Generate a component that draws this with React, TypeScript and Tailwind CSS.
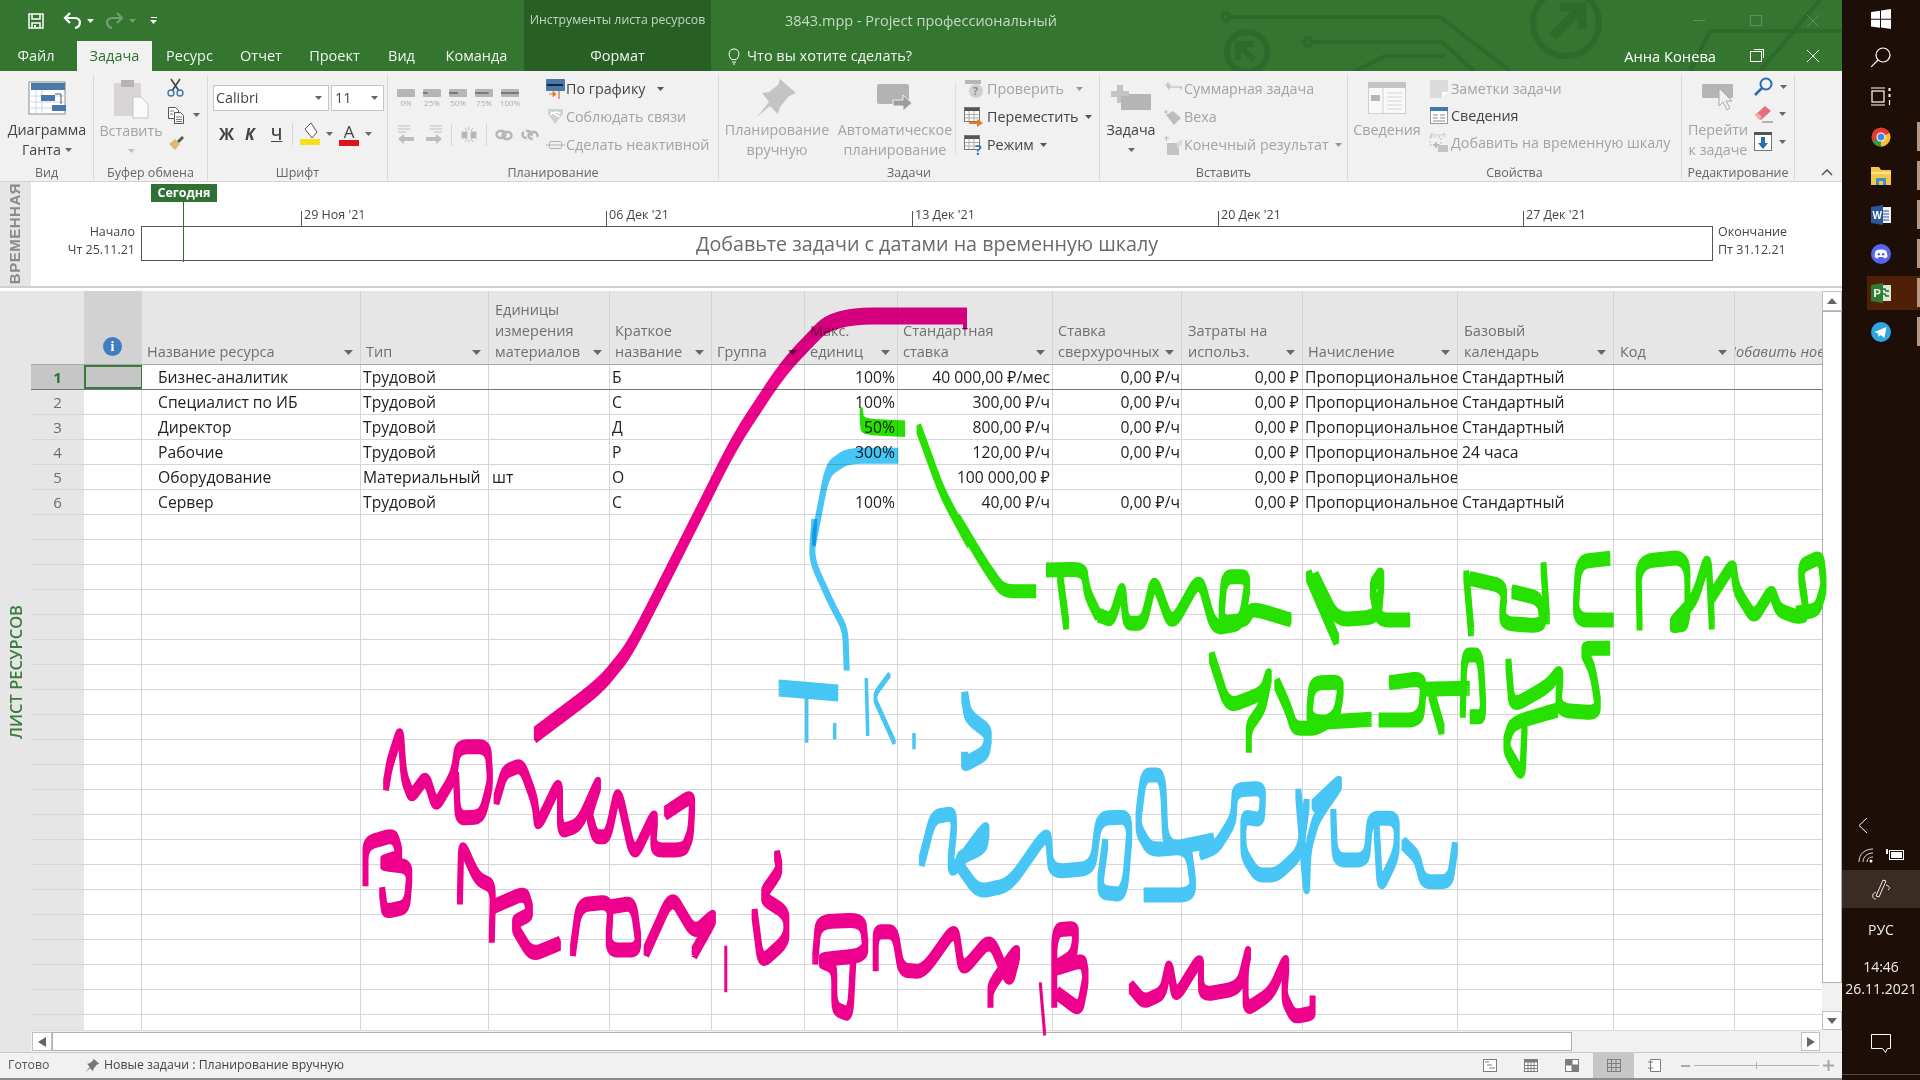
import React from "react";

type P = number[];

function sharp(p: P, ox: number, oy: number, sx: number, sy: number, dy: number) {
  const pts: [number, number][] = [];
  for (let i = 0; i < p.length; i += 2) pts.push([ox + p[i] * sx, oy + p[i + 1] * sy + dy]);
  const n = (v: number) => v.toFixed(1);
  let d = `M${n(pts[0][0])} ${n(pts[0][1])}`;
  for (let i = 1; i < pts.length - 1; i++) {
    const [ax, ay] = pts[i - 1], [bx, by] = pts[i], [cx, cy] = pts[i + 1];
    const k = 0.3;
    d += `L${n(bx - (bx - ax) * k)} ${n(by - (by - ay) * k)}Q${n(bx)} ${n(by)} ${n(bx + (cx - bx) * k)} ${n(by + (cy - by) * k)}`;
  }
  const l = pts[pts.length - 1];
  d += `L${n(l[0])} ${n(l[1])}`;
  return d;
}

function Stroke({ p, c, f, nib = 4.5, w = 6 }: { p: P; c: string; f: number[]; nib?: number; w?: number }) {
  const ds: string[] = [];
  for (let dy = -nib; dy <= nib; dy += 1.5) ds.push(sharp(p, f[0], f[1], f[2], f[3], dy));
  return <path d={ds.join("")} stroke={c} strokeWidth={w} fill="none" strokeLinejoin="round" strokeLinecap="butt" />;
}

const Z8 = [340, 700, 1 / 1.568, 1 / 3];
const Z9 = [740, 520, 1 / 1.425, 1 / 3];
const Z5 = [780, 280, 1 / 1.479, 1 / 3];
const Z10 = [1200, 750, 1 / 3, 1 / 3];
const F1 = [0, 0, 1, 1];
const PINK = "#ec008c";
const BLUE = "#47c5f4";
const GREEN = "#27e000";

function InkLayer() {
  const pink: P[] = [
    [72, 258, 78, 190, 95, 90, 100, 230, 112, 290, 135, 230, 150, 320, 178, 230, 185, 140, 232, 140, 236, 250, 222, 350, 185, 355, 182, 230],
    [245, 300, 258, 215, 285, 195, 305, 300, 310, 380, 345, 240, 345, 395, 375, 375, 408, 235, 390, 340, 400, 410, 420, 410, 436, 265, 460, 475, 495, 335, 490, 450, 540, 450, 550, 400, 553, 285, 510, 340],
    [40, 545, 40, 430, 85, 405, 95, 470, 62, 490, 110, 500, 105, 620, 70, 635, 66, 575],
    [188, 600, 190, 430, 215, 535, 240, 560, 238, 715],
    [240, 620, 290, 578, 300, 640, 270, 670, 300, 765, 345, 730],
    [365, 755, 375, 615, 425, 605, 420, 750, 470, 750, 460, 610, 425, 620],
    [480, 755, 520, 585, 555, 700, 590, 640, 555, 760],
    [605, 740, 605, 875],
    [650, 640, 660, 790, 700, 720, 700, 640, 660, 590, 690, 510, 685, 465],
    [745, 780, 750, 665, 820, 660, 825, 765, 750, 780, 775, 800, 775, 925, 800, 945, 805, 770],
    [840, 800, 840, 695, 870, 695, 880, 810, 915, 815, 965, 680, 975, 815, 1020, 715, 1050, 850, 1065, 740, 1020, 860, 1020, 910],
    [1098, 850, 1105, 1005],
    [1120, 910, 1120, 690, 1155, 685, 1150, 770, 1115, 810, 1165, 780, 1170, 830, 1160, 930, 1125, 880],
    [1240, 860, 1260, 905, 1290, 880, 1300, 790, 1310, 895, 1350, 770, 1350, 885, 1410, 865, 1425, 750, 1420, 800, 1420, 930, 1460, 880, 1485, 770, 1480, 890, 1495, 950, 1525, 940, 1525, 900],
  ];
  const blue8: P[] = [
    [912, 485, 930, 350, 965, 340, 955, 530, 1015, 375, 1010, 440, 965, 480, 1000, 575, 1050, 555, 1110, 390, 1115, 515, 1180, 505, 1190, 355, 1240, 350, 1230, 585, 1190, 575, 1200, 430],
    [1260, 585, 1340, 585, 1330, 440, 1270, 450, 1250, 380, 1260, 225, 1290, 225, 1295, 450, 1370, 420],
  ];
  const blue10: P[] = [
    [0, 310, 50, 290, 100, 210, 105, 120, 190, 115, 185, 210, 130, 200, 130, 310, 170, 375, 230, 375, 300, 310, 320, 160],
    [295, 130, 320, 440, 325, 290, 350, 200, 430, 85, 340, 170],
    [400, 190, 405, 330, 500, 330, 510, 205, 590, 205, 590, 310, 540, 415, 530, 240],
    [610, 280, 650, 320, 670, 395, 750, 395, 765, 290],
  ];
  const blue9: P[] = [
    [55, 505, 140, 520],
    [95, 540, 95, 665],
    [135, 615, 135, 655],
    [180, 480, 182, 645],
    [213, 465, 190, 530, 205, 600, 220, 670],
    [248, 645, 248, 685],
    [320, 530, 325, 590, 355, 640, 350, 700, 320, 735, 320, 710],
  ];
  const green9: P[] = [
    [436, 150, 490, 148, 495, 220, 510, 285],
    [456, 170, 465, 315],
    [510, 285, 530, 300, 545, 195, 550, 310, 575, 310, 590, 175, 615, 320, 655, 170, 675, 325, 715, 310, 725, 170, 690, 170, 685, 310, 720, 300, 730, 265, 785, 300],
    [810, 165, 850, 360],
    [820, 170, 850, 300, 910, 290, 915, 155, 900, 200, 910, 300, 955, 300],
    [1035, 165, 1042, 335],
    [1040, 175, 1090, 200, 1085, 310, 1145, 318, 1140, 235, 1100, 215],
    [1150, 300, 1145, 140],
    [1240, 115, 1195, 125, 1190, 300, 1245, 300],
    [1282, 318, 1280, 125, 1350, 110, 1350, 312, 1325, 318, 1360, 240, 1380, 105, 1385, 315],
    [1385, 230, 1415, 130, 1420, 210, 1445, 295, 1470, 210, 1480, 270, 1505, 290, 1520, 285, 1510, 140, 1540, 110, 1545, 200, 1535, 270, 1505, 280],
    [672, 410, 695, 560, 745, 520, 755, 455, 745, 560, 725, 620, 725, 685],
    [765, 490, 780, 560, 790, 625, 820, 625, 850, 590, 858, 485, 815, 490, 810, 610, 900, 598],
    [910, 600, 970, 600, 975, 475, 925, 488],
    [985, 520, 1000, 630],
    [970, 508, 1040, 505],
    [1030, 580, 1032, 405, 1055, 405, 1060, 590, 1040, 590],
    [1095, 430, 1100, 560, 1150, 500, 1170, 450, 1165, 570, 1225, 580, 1215, 450, 1200, 385, 1240, 385],
    [1165, 570, 1100, 610, 1090, 680, 1115, 770, 1118, 620],
  ];
  return (
    <>
      <svg className="absolute left-0 top-0 z-10 pointer-events-none" width="1842" height="1080" viewBox="0 0 1842 1080">
        {pink.map((p, i) => <Stroke key={i} p={p} c={PINK} f={Z8} nib={i === 7 || i === 11 ? 1 : 4.5} w={i === 7 || i === 11 ? 3 : 6} />)}
        {blue8.map((p, i) => <Stroke key={i} p={p} c={BLUE} f={Z8} />)}
        {blue10.map((p, i) => <Stroke key={i} p={p} c={BLUE} f={Z10} />)}
        <Stroke p={[106, 0, 102, 120, 130, 250, 150, 330, 152, 450]} c={BLUE} f={Z9} nib={1} w={6} />
        {blue9.map((p, i) => <Stroke key={i} p={p} c={BLUE} f={Z9} nib={i === 0 ? 7 : i === 6 ? 5 : 2} w={i === 6 ? 7 : 3.5} />)}
        {green9.map((p, i) => <Stroke key={i} p={p} c={GREEN} f={Z9} />)}
        <Stroke p={[205, 445, 240, 640, 280, 790]} c={GREEN} f={Z5} nib={4} w={5} />
        <Stroke p={[310, 0, 350, 140, 375, 215, 422, 215]} c={GREEN} f={Z9} nib={5} w={5} />
      </svg>
      <svg className="absolute left-0 top-0 z-10 pointer-events-none mix-blend-multiply" width="1842" height="1080" viewBox="0 0 1842 1080">
        <Stroke p={[535, 735, 600, 686, 630, 649, 686, 539, 735, 441, 784, 367, 833, 316, 967, 316]} c={PINK} f={F1} nib={6} w={5} />
        <Stroke p={[965, 318, 965, 329]} c={PINK} f={F1} nib={1} w={4} />
        <Stroke p={[175, 527, 100, 527, 70, 570, 50, 780]} c={BLUE} f={Z5} nib={6} w={4} />
        <Stroke p={[120, 403, 122, 440, 185, 447]} c={GREEN} f={Z5} nib={7} w={3} />
      </svg>
    </>
  );
}

/* ---------- small icons ---------- */
const Caret = ({ c = "#666", className = "" }: { c?: string; className?: string }) => (
  <svg width="7" height="4" viewBox="0 0 7 4" className={className}><path d="M0 0h7L3.5 4z" fill={c} /></svg>
);

const Gantt = () => (
  <svg width="38" height="34" viewBox="0 0 38 34">
    <rect x="1" y="1" width="36" height="32" fill="#fff" stroke="#8a8a8a" />
    <rect x="3" y="2" width="34" height="7" fill="#4a78a8" />
    <path d="M8 9v24M14 9v24M3 15h34M3 21h34M3 27h34" stroke="#c9d6e4" />
    <rect x="13" y="14" width="14" height="6" fill="#4a78a8" />
    <rect x="24" y="24" width="14" height="6" fill="#4a78a8" />
    <path d="M27 13h6v10" stroke="#555" fill="none" />
  </svg>
);
const Clip = () => (
  <svg width="36" height="40" viewBox="0 0 36 40">
    <rect x="1" y="4" width="27" height="33" fill="#d9d5d5" />
    <rect x="8" y="1" width="13" height="7" fill="#b8b3b3" />
    <path d="M20 18h8l7 7v14H20z" fill="#fafafa" stroke="#c4c4c4" />
  </svg>
);
const Scissors = () => (
  <svg width="18" height="19" viewBox="0 0 18 19" fill="none">
    <path d="M4 1l8 12M13 1L5 13" stroke="#444" strokeWidth="1.6" />
    <circle cx="4" cy="15" r="3" stroke="#3f79ad" strokeWidth="1.4" />
    <circle cx="13" cy="15" r="3" stroke="#3f79ad" strokeWidth="1.4" />
  </svg>
);
const CopyI = () => (
  <svg width="18" height="18" viewBox="0 0 18 18" fill="#fff" stroke="#555">
    <path d="M1.5 1.5h7l3 3v8h-10z" />
    <path d="M7.5 6.5h6l3 3v8h-9z" />
    <path d="M3 5h4M3 8h3M9 11h6M9 13.500h6M9 15.500h6" strokeWidth=".8" />
  </svg>
);
const Brush = () => (
  <svg width="18" height="16" viewBox="0 0 18 16">
    <path d="M2 9l6-5 5 5-5 6z" fill="#e0b77a" />
    <path d="M10 6l5-5 2 2-5 5z" fill="#555" />
  </svg>
);
const Pct = ({ t, f }: { t: string; f: number }) => (
  <div className="flex flex-col items-center w-[26px]">
    <svg width="18" height="8" viewBox="0 0 18 8">
      <rect width="18" height="8" rx="1" fill="#b5b5b5" />
      {f > 0 && <rect y="3" width={18 * f} height="2" fill="#7b7b7b" />}
    </svg>
    <span className="text-[8px] leading-[12px] text-[#aaa]">{t}</span>
  </div>
);
const Sep = ({ h = "h-[22px]" }: { h?: string }) => <span className={`w-px ${h} bg-[#d4d4d4]`} />;
const Outdent = ({ flip }: { flip?: boolean }) => (
  <svg width="19" height="20" viewBox="0 0 19 20" style={flip ? { transform: "scaleX(-1)" } : undefined}>
    <path d="M1 1h12M1 4h12M1 7h8" stroke="#bdbdbd" />
    <path d="M1 14l6-5v3h10v4H7v3z" fill="#bdbdbd" />
  </svg>
);
const Split = () => (
  <svg width="16" height="18" viewBox="0 0 16 18" stroke="#bdbdbd">
    <rect x="1" y="6" width="5" height="6" fill="#b5b5b5" /><rect x="10" y="6" width="5" height="6" fill="#b5b5b5" />
    <path d="M8 1v3M8 14v3M4 2l2 3M12 2l-2 3M4 16l2-3M12 16l-2-3" fill="none" />
  </svg>
);
const LinkI = ({ broken }: { broken?: boolean }) => (
  <svg width="18" height="18" viewBox="0 0 18 18" fill="none" stroke="#b5b5b5" strokeWidth="2.400">
    <rect x="1.500" y="5" width="9" height="7" rx="3.500" strokeDasharray={broken ? "9 5" : undefined} />
    <rect x="7.500" y="6" width="9" height="7" rx="3.500" strokeDasharray={broken ? "9 5" : undefined} />
  </svg>
);
const Sched = () => (
  <svg width="19" height="20" viewBox="0 0 19 20">
    <rect x="0" y="0" width="19" height="12" rx="1" fill="#4a78a8" />
    <rect x="1" y="5" width="16" height="2" fill="#14263a" />
    <path d="M3 15h6M7 12.500l3 2.500-3 2.500z" stroke="#e07c26" fill="#e07c26" />
    <path d="M13 12v8" stroke="#c5582a" />
  </svg>
);
const Respect = () => (
  <svg width="19" height="20" viewBox="0 0 19 20" fill="none">
    <path d="M2 7l7 10 8-10V2H2z" fill="#d0d0d0" />
    <path d="M5 8c0-3 8-4 9-1M5 5c3 2 6 3 9 5" stroke="#fff" strokeWidth="1.500" />
  </svg>
);
const Inact = () => (
  <svg width="19" height="10" viewBox="0 0 19 10" fill="none" stroke="#b0b0b0">
    <path d="M0 5h19" /><rect x="3.500" y="1.500" width="12" height="7" rx="1" />
  </svg>
);
const Pin = ({ s = 42, c = "#c4c4c4" }: { s?: number; c?: string }) => (
  <svg width={s} height={s} viewBox="0 0 42 42">
    <path d="M24 2l16 14-7 3-9 11-2 7-8-8L1 40l12-15-7-9 7-1 9-7z" fill={c} />
  </svg>
);
const AutoI = () => (
  <svg width="36" height="28" viewBox="0 0 36 28">
    <rect x="0" y="0" width="32" height="20" rx="2" fill="#b3b3b3" />
    <path d="M16 16h10v-5l9 8-9 8v-5H16z" fill="#9d9d9d" stroke="#f1f1f1" />
  </svg>
);
const Check = () => (
  <svg width="19" height="18" viewBox="0 0 19 18">
    <rect x="0" y="0" width="16" height="4" fill="#b5b5b5" />
    <circle cx="11" cy="11" r="7" fill="#d0d0d0" />
    <text x="8" y="15" fontSize="11" fontWeight="700" fill="#888" fontFamily="Open Sans">?</text>
  </svg>
);
const Cal = ({ arrow, q }: { arrow?: boolean; q?: boolean }) => (
  <svg width="20" height="20" viewBox="0 0 20 20">
    <rect x=".5" y=".5" width="15" height="14" fill="#fff" stroke="#777" />
    <rect x="1" y="1" width="14" height="3" fill="#555" />
    <path d="M5 4v10M10 4v10M1 7.500h14M1 11h14" stroke="#aaa" />
    {arrow && <path d="M5 15h8v-3l6 4-6 4v-3H5z" fill="#e07c26" />}
    {q && <text x="11" y="20" fontSize="14" fontWeight="700" fill="#2a78c0" fontFamily="Open Sans">?</text>}
  </svg>
);
const TaskI = () => (
  <svg width="40" height="26" viewBox="0 0 40 26">
    <path d="M6 0h6v6h6v6h-6v6H6v-6H0V6h6z" fill="#c4c4c4" />
    <path d="M10 11h8v-2h22v16H10z" fill="#b5b5b5" />
  </svg>
);
const SumI = () => (
  <svg width="20" height="16" viewBox="0 0 20 16" stroke="#b5b5b5" fill="none">
    <path d="M2 4h6M5 1v6M4 6h15M6 6v3M18 6v3" />
  </svg>
);
const MileI = () => (
  <svg width="20" height="18" viewBox="0 0 20 18">
    <path d="M1 4h4M3 2v4" stroke="#bbb" /><path d="M3 7l7-4 8 7-7 7z" fill="#bdbdbd" />
  </svg>
);
const DelivI = () => (
  <svg width="20" height="20" viewBox="0 0 20 20">
    <path d="M1 3h5M3.500 1v5" stroke="#bbb" /><path d="M4 8h12v12H4z" fill="#c2c2c2" /><path d="M14 8l5-4v5l-5 5z" fill="#dadada" />
  </svg>
);
const InfoBig = () => (
  <svg width="38" height="32" viewBox="0 0 38 32">
    <rect x=".5" y=".5" width="37" height="31" fill="#fbf8fb" stroke="#cfcfcf" />
    <rect x="0" y="0" width="38" height="6" fill="#c4c4c4" />
    <rect x="3" y="13" width="9" height="6" fill="#b5b5b5" />
    <path d="M15 6v26" stroke="#cfcfcf" /><path d="M19 11h15M19 15h15M19 19h15M19 23h15M19 27h15" stroke="#d4d4d4" />
  </svg>
);
const Note = () => (
  <svg width="18" height="18" viewBox="0 0 18 18"><path d="M0 0h18v12l-6 6H0z" fill="#dbdbdb" /><path d="M12 18v-6h6z" fill="#fff" /></svg>
);
const InfoS = () => (
  <svg width="18" height="17" viewBox="0 0 18 17">
    <rect x=".5" y=".5" width="17" height="16" fill="#fff" stroke="#9a9a9a" />
    <rect x="0" y="0" width="18" height="4" fill="#3f79ad" />
    <path d="M3 8h5M3 11h5M10 8h5M10 11h5M3 14h12" stroke="#888" />
  </svg>
);
const AddTl = () => (
  <svg width="19" height="19" viewBox="0 0 19 19" fill="none" stroke="#bbb">
    <path d="M1 2h16M3 0v4M15 0v4" strokeDasharray="2 1" /><rect x="1" y="4" width="11" height="8" strokeDasharray="2 2" />
    <rect x="9" y="12" width="10" height="7" fill="#c4c4c4" stroke="none" /><path d="M4 12h6M7 9v6" strokeWidth="2" />
  </svg>
);
const GoTo = () => (
  <svg width="32" height="28" viewBox="0 0 32 28">
    <rect x="0" y="0" width="31" height="14" rx="1" fill="#b5b5b5" />
    <path d="M17 4v18l4-4 4 8 3-2-4-7h6z" fill="#f1f1f1" stroke="#a8a8a8" />
  </svg>
);
const Find = () => (
  <svg width="19" height="19" viewBox="0 0 19 19" fill="none" stroke="#2a6cb0" strokeWidth="2">
    <circle cx="12" cy="7" r="5.500" /><path d="M8 11l-7 7" strokeWidth="2.500" />
  </svg>
);
const Eraser = () => (
  <svg width="20" height="18" viewBox="0 0 20 18">
    <path d="M1 10l10-9 6 5-10 9z" fill="#e66f7c" /><path d="M1 10l4 5 3-3-4-4z" fill="#f4aab0" /><path d="M8 17h11" stroke="#777" />
  </svg>
);
const Scroll = () => (
  <svg width="18" height="19" viewBox="0 0 18 19">
    <rect x=".5" y=".5" width="17" height="18" fill="#fff" stroke="#777" /><rect x="0" y="0" width="18" height="3" fill="#555" />
    <path d="M7 5h4v6h3l-5 6-5-6h3z" fill="#2a6cb0" />
  </svg>
);

function Group({ w, label, children }: { w: string; label: string; children?: React.ReactNode }) {
  return (
    <div className={`${w} mt-1 mb-[1px] flex flex-col shrink-0 border-r border-[#d8d8d8]`}>
      <div className="flex-1 flex min-h-0">{children}</div>
      <div className="h-[15px] text-center text-[12.5px] leading-[15px] text-[#666] whitespace-nowrap">{label}</div>
    </div>
  );
}
function Large({ icon, lines, dark, w, caret }: { icon: React.ReactNode; lines: React.ReactNode[]; dark?: boolean; w: string; caret?: boolean }) {
  return (
    <div className={`${w} flex flex-col items-center shrink-0`}>
      <div className="h-[45px] flex items-center justify-center">{icon}</div>
      {lines.map((l, i) => (
        <div key={i} className={`leading-[20px] text-[14.3px] whitespace-nowrap flex items-center ${dark ? "text-[#444]" : "text-[#a3a3a3]"}`}>{l}</div>
      ))}
      {caret && <Caret c={dark ? "#666" : "#aaa"} className="mt-2" />}
    </div>
  );
}
function Small({ icon, text, dark, caret, iw = "w-[22px]", h = "h-[28px]" }: { icon: React.ReactNode; text: string; dark?: boolean; caret?: string; iw?: string; h?: string }) {
  return (
    <div className={`${h} flex items-center whitespace-nowrap`}>
      <span className={`${iw} flex items-center justify-center shrink-0`}>{icon}</span>
      <span className={`text-[14.3px] ${dark ? "text-[#444]" : "text-[#a3a3a3]"}`}>{text}</span>
      {caret && <Caret c={dark ? "#555" : "#999"} className={caret} />}
    </div>
  );
}

function Ribbon() {
  return (
    <div className="h-[111px] bg-[#f1f1f1] flex shrink-0 border-b border-[#d4d4d4] relative">
      <Group w="w-[94px]" label="Вид">
        <Large w="w-[94px]" dark icon={<Gantt />} lines={["Диаграмма", <>Ганта<Caret className="ml-[4px]" /></>]} />
      </Group>
      <Group w="w-[114px]" label="Буфер обмена">
        <div className="w-[70px] flex flex-col items-center pl-1">
          <div className="h-[45px] flex items-center justify-center mt-[1px]"><Clip /></div>
          <div className="leading-[20px] text-[14.3px] text-[#a3a3a3]">Вставить</div>
          <Caret c="#c0c0c0" className="mt-[8px]" />
        </div>
        <div className="flex flex-col pt-[3px] pl-[3px] gap-[9px]">
          <Scissors />
          <div className="flex items-center gap-2"><CopyI /><Caret /></div>
          <div className="mt-[2px]"><Brush /></div>
        </div>
      </Group>
      <Group w="w-[180px]" label="Шрифт">
        <div className="flex flex-col pl-[5px] pt-[10px]">
          <div className="flex gap-[2px]">
            <div className="w-[116px] h-[26px] bg-white border border-[#c6c6c6] flex items-center justify-between pl-[2px] pr-[6px] text-[14.3px] text-[#444]">Calibri<Caret /></div>
            <div className="w-[53px] h-[26px] bg-white border border-[#c6c6c6] flex items-center justify-between pl-[3px] pr-[5px] text-[14.3px] text-[#444]">11<Caret /></div>
          </div>
          <div className="flex items-center h-[24px] mt-[11px] pl-[6px] text-[#444]">
            <span className="w-[26px] font-bold text-[16px]">Ж</span>
            <span className="w-[26px] font-bold italic text-[16px]">К</span>
            <span className="w-[21px] font-semibold underline text-[16px]">Ч</span>
            <Sep />
            <span className="ml-[7px] flex items-center gap-[6px]">
              <svg width="20" height="24" viewBox="0 0 20 24"><path d="M5 7l6-6 6 9-5 6z" fill="#fff" stroke="#555" /><rect y="17" width="20" height="6" fill="#f7e017" /></svg>
              <Caret />
            </span>
            <span className="ml-[6px] flex items-center gap-[6px]">
              <span className="flex flex-col items-center w-[20px]"><span className="text-[17px] leading-[17px]">A</span><span className="w-[20px] h-[6px] bg-[#d8141c]" /></span>
              <Caret />
            </span>
          </div>
        </div>
        <svg className="self-end ml-auto mr-[3px] -mb-[12px]" width="8" height="8" viewBox="0 0 8 8" fill="none" stroke="#777"><path d="M.5.500h7v7M3 3l4 4M4.500 7H7V4.500" /></svg>
      </Group>
      <Group w="w-[331px]" label="Планирование">
        <div className="flex flex-col w-[156px] pl-[5px] pt-[14px]">
          <div className="flex h-[24px]">
            <Pct t="0%" f={0} /><Pct t="25%" f={0.25} /><Pct t="50%" f={0.5} /><Pct t="75%" f={0.75} /><Pct t="100%" f={1} />
          </div>
          <div className="flex items-center h-[24px] mt-[10px] pl-[4px]">
            <Outdent /><span className="w-[8px]" /><Outdent flip /><span className="w-[8px]" /><Sep /><span className="w-[9px]" /><Split /><span className="w-[9px]" /><Sep /><span className="w-[8px]" /><LinkI /><span className="w-[8px]" /><LinkI broken />
          </div>
        </div>
        <div className="flex flex-col">
          <Small icon={<Sched />} text="По графику" dark caret="ml-[12px]" />
          <Small icon={<Respect />} text="Соблюдать связи" />
          <Small icon={<Inact />} text="Сделать неактивной" />
        </div>
      </Group>
      <Group w="w-[381px]" label="Задачи">
        <Large w="w-[116px]" icon={<Pin />} lines={["Планирование", "вручную"]} />
        <Large w="w-[120px]" icon={<AutoI />} lines={["Автоматическое", "планирование"]} />
        <div className="w-px h-[72px] bg-[#dedede] mr-[5px] mt-[8px]" />
        <div className="flex flex-col">
          <Small iw="w-[26px]" icon={<Check />} text="Проверить" caret="ml-[12px]" />
          <Small iw="w-[26px]" icon={<Cal arrow />} text="Переместить" dark caret="ml-[6px]" />
          <Small iw="w-[26px]" icon={<Cal q />} text="Режим" dark caret="ml-[6px]" />
        </div>
      </Group>
      <Group w="w-[248px]" label="Вставить">
        <Large w="w-[62px]" dark caret icon={<TaskI />} lines={["Задача"]} />
        <div className="flex flex-col">
          <Small iw="w-[22px]" icon={<SumI />} text="Суммарная задача" />
          <Small iw="w-[22px]" icon={<MileI />} text="Веха" />
          <Small iw="w-[22px]" icon={<DelivI />} text="Конечный результат" caret="ml-[6px]" />
        </div>
      </Group>
      <Group w="w-[334px]" label="Свойства">
        <Large w="w-[78px]" icon={<InfoBig />} lines={["Сведения"]} />
        <div className="flex flex-col">
          <Small h="h-[27px]" iw="w-[25px]" icon={<Note />} text="Заметки задачи" />
          <Small h="h-[27px]" iw="w-[25px]" icon={<InfoS />} text="Сведения" dark />
          <Small h="h-[27px]" iw="w-[25px]" icon={<AddTl />} text="Добавить на временную шкалу" />
        </div>
      </Group>
      <Group w="w-[113px]" label="Редактирование">
        <Large w="w-[72px]" icon={<GoTo />} lines={["Перейти", "к задаче"]} />
        <div className="flex flex-col pt-[2px] gap-[9px]">
          <div className="flex items-center gap-[7px]"><Find /><Caret /></div>
          <div className="flex items-center gap-[5px]"><Eraser /><Caret /></div>
          <div className="flex items-center gap-[7px]"><Scroll /><Caret /></div>
        </div>
      </Group>
      <div className="flex-1 flex items-end justify-center pb-[5px] pl-[16px]">
        <svg width="12" height="7" viewBox="0 0 12 7" fill="none" stroke="#555" strokeWidth="1.500"><path d="M1 6l5-5 5 5" /></svg>
      </div>
    </div>
  );
}

function TitleBar() {
  const tabs = [
    ["Файл", "w-[77px] pr-[5px]"], ["Задача", "w-[75px]"], ["Ресурс", "w-[75px]"], ["Отчет", "w-[68px]"],
    ["Проект", "w-[79px]"], ["Вид", "w-[55px]"], ["Команда", "w-[95px]"],
  ];
  return (
    <div className="h-[71px] bg-[#34752f] flex shrink-0 text-white relative overflow-hidden">
      <svg className="absolute right-0 top-0" width="680" height="71" viewBox="1162 0 680 71" fill="none" stroke="#2d6a2b" strokeWidth="4">
        <circle cx="1226" cy="17" r="4" /><path d="M1230 17h210l70 54" />
        <circle cx="1308" cy="42" r="4" /><path d="M1312 42h130l32 29" />
        <path d="M1355 71l30-15h60" />
        <circle cx="1247" cy="52" r="20" strokeWidth="6" /><path d="M1254 60l-16-16M1238 60V44h16" strokeWidth="6" />
        <circle cx="1566" cy="23" r="33" strokeWidth="6" /><path d="M1553 36l28-28M1560 7h22v22" strokeWidth="9" />
        <path d="M1690 71l20-40h132M1760 71l60-71" strokeWidth="4" />
      </svg>
      <div className="w-[524px] flex flex-col shrink-0 relative">
        <div className="h-[41px] flex items-center pl-[28px]">
          <svg width="16" height="16" viewBox="0 0 16 16" fill="none" stroke="#fff" strokeWidth="1.500"><path d="M1 1h14v14H1z" /><path d="M4 1v5h8V1M4 15v-5h8v5" /><rect x="6" y="12" width="2" height="2" fill="#fff" stroke="none" /></svg>
          <svg className="ml-[19px]" width="19" height="17" viewBox="0 0 19 17" fill="none" stroke="#fff" strokeWidth="2.200"><path d="M7 1L2 6l5 5" /><path d="M2 6h10c7 0 6 9 0 10" /></svg>
          <Caret c="#fff" className="ml-[5px]" />
          <svg className="ml-[11px] opacity-30" width="19" height="17" viewBox="0 0 19 17" fill="none" stroke="#fff" strokeWidth="2.200"><path d="M12 1l5 5-5 5" /><path d="M17 6H7c-7 0-6 9 0 10" /></svg>
          <Caret c="#fff" className="ml-[5px] opacity-30" />
          <span className="ml-[14px] flex flex-col items-center gap-[2px]"><span className="w-[6px] h-px bg-white" /><Caret c="#fff" /></span>
        </div>
        <div className="h-[30px] flex">
          {tabs.map(([t, w], i) => (
            <div key={t} className={`${w} flex items-center justify-center text-[14.5px] ${i === 1 ? "bg-[#f1f1f1] text-[#2e6e2e]" : "text-[#f1f5f0]"}`}>{t}</div>
          ))}
        </div>
      </div>
      <div className="w-[187px] bg-[#285f24] flex flex-col shrink-0 relative">
        <div className="h-[41px] flex items-center justify-center text-[12.3px] text-[#c5d5c3] whitespace-nowrap">Инструменты листа ресурсов</div>
        <div className="h-[30px] flex items-center justify-center text-[14.5px] text-[#f1f5f0]">Формат</div>
      </div>
      <div className="flex-1 flex flex-col relative">
        <div className="h-[41px] flex items-center pl-[74px] text-[14.500px] text-[#c9d8c8] whitespace-nowrap">
          3843.mpp - Project профессиональный
          <div className="ml-auto flex items-center gap-[45px] pr-[23px] opacity-20">
            <span className="w-[12px] h-px bg-white" />
            <span className="w-[12px] h-[11px] border border-white" />
            <svg width="12" height="12" viewBox="0 0 12 12" stroke="#fff"><path d="M0 0l12 12M12 0L0 12" /></svg>
          </div>
        </div>
        <div className="h-[30px] flex items-center pl-[17px] text-[14.500px] text-[#f1f5f0] whitespace-nowrap">
          <svg width="12" height="17" viewBox="0 0 12 17" fill="none" stroke="#fff"><path d="M3.500 11.500C0 8 0 1 6 1s6 7 2.500 10.500zM4 14h4M5 16h2" /></svg>
          <span className="ml-[7px]">Что вы хотите сделать?</span>
          <span className="ml-auto text-white text-[14.7px]">Анна Конева</span>
          <span className="ml-[34px] w-[12px] h-[11px] border border-white relative"><span className="absolute -top-[3px] -right-[3px] w-[10px] h-[9px] border-t border-r border-white" /></span>
          <svg className="ml-[45px] mr-[23px]" width="12" height="12" viewBox="0 0 12 12" stroke="#fff"><path d="M0 0l12 12M12 0L0 12" /></svg>
        </div>
      </div>
    </div>
  );
}

function Timeline() {
  const ticks = [["29 Ноя '21", 159], ["06 Дек '21", 464], ["13 Дек '21", 770], ["20 Дек '21", 1076], ["27 Дек '21", 1381]] as const;
  return (
    <div className="h-[106px] flex shrink-0 bg-white border-b-2 border-[#d0d0d0]">
      <div className="w-[31px] bg-[#e6e6e6] flex items-center justify-center">
        <span className="[writing-mode:vertical-rl] rotate-180 text-[15px] font-semibold tracking-[0.5px] text-[#8a8a8a] font-['Liberation_Sans']">ВРЕМЕННАЯ</span>
      </div>
      <div className="flex-1 flex pt-[44px] items-start">
        <div className="w-[110px] pr-[6px] text-right text-[12.5px] leading-[18px] text-[#444] -mt-[3px] whitespace-nowrap">Начало<br />Чт 25.11.21</div>
        <div className="w-[1572px] h-[35px] border border-[#555] relative flex items-center justify-center text-[19.7px] text-[#6a6a6a] whitespace-nowrap shrink-0">
          Добавьте задачи с датами на временную шкалу
          <div className="absolute left-[9px] -top-[43px] w-[66px] h-[18px] bg-[#2f7133] text-white text-[12.5px] font-bold leading-[18px] text-center">Сегодня</div>
          <div className="absolute left-[41px] -top-[25px] h-[60px] w-px bg-[#2f7133]" />
          {ticks.map(([t, x]) => (
            <div key={t} className="absolute -top-[16px] h-[16px] border-l border-[#555] pl-[2px] text-[12.5px] leading-[7px] text-[#444] whitespace-nowrap" style={{ left: x }}>{t}</div>
          ))}
        </div>
        <div className="pl-[5px] text-[12.5px] leading-[18px] text-[#444] -mt-[3px] whitespace-nowrap">Окончание<br />Пт 31.12.21</div>
      </div>
    </div>
  );
}

const COLS = ["w-[219px]", "w-[128px]", "w-[121px]", "w-[102px]", "w-[93px]", "w-[93px]", "w-[155px]", "w-[129px]", "w-[121px]", "w-[155px]", "w-[156px]", "w-[121px]", "w-[87px]"];
const HEAD = [["Название ресурса"], ["Тип"], ["Единицы", "измерения", "материалов"], ["Краткое", "название"], ["Группа"], ["Макс.", "единиц"], ["Стандартная", "ставка"], ["Ставка", "сверхурочных"], ["Затраты на", "использ."], ["Начисление"], ["Базовый", "календарь"], ["Код"]];
const HPAD = ["pl-[5px]", "pl-[5px]", "pl-[6px]", "pl-[5px]", "pl-[5px]", "pl-[5px]", "pl-[5px]", "pl-[5px]", "pl-[6px]", "pl-[5px]", "pl-[6px]", "pl-[6px]"];
const RIGHT = [5, 6, 7, 8];
const PAD = ["pl-[16px]", "pl-[2px]", "pl-[3px]", "pl-[2px]", "pl-[2px]", "pr-[2px]", "pr-[2px]", "pr-[1px]", "pr-[3px]", "pl-[2px]", "pl-[4px]", "", ""];
const P_ = "Пропорциональное", S = "Стандартный", T = "Трудовой", Z = "0,00 ₽/ч", C = "0,00 ₽";
const ROWS = [
  ["Бизнес-аналитик", T, "", "Б", "", "100%", "40 000,00 ₽/мес", Z, C, P_, S, "", ""],
  ["Специалист по ИБ", T, "", "С", "", "100%", "300,00 ₽/ч", Z, C, P_, S, "", ""],
  ["Директор", T, "", "Д", "", "50%", "800,00 ₽/ч", Z, C, P_, S, "", ""],
  ["Рабочие", T, "", "Р", "", "300%", "120,00 ₽/ч", Z, C, P_, "24 часа", "", ""],
  ["Оборудование", "Материальный", "шт", "О", "", "", "100 000,00 ₽", "", C, P_, "", "", ""],
  ["Сервер", T, "", "С", "", "100%", "40,00 ₽/ч", Z, C, P_, S, "", ""],
];
const BLANK = Array.from({ length: 22 }, () => ["", "", "", "", "", "", "", "", "", "", "", "", ""]);

const FilterCaret = () => (
  <svg width="9" height="5" viewBox="0 0 9 5" className="mb-[7px] shrink-0"><path d="M0 0h9L4.500 5z" fill="#666" /></svg>
);

function Table() {
  const all = [...ROWS, ...BLANK];
  return (
    <div className="flex-1 min-h-0 overflow-hidden flex flex-col">
      <div className="h-[74px] flex shrink-0 bg-[#e6e6e6] border-b border-[#a8a8a8]">
        <div className="w-[53px] shrink-0" />
        <div className="w-[58px] shrink-0 bg-[#d2d2d2] flex items-end justify-center pb-[8px] border-r border-[#d4d4d4]">
          <span className="w-[19px] h-[19px] rounded-full bg-[#3f7cc0] text-white text-[14px] leading-[19px] font-bold text-center font-['Liberation_Serif']">i</span>
        </div>
        {HEAD.map((h, i) => (
          <div key={i} className={`${COLS[i]} ${HPAD[i]} shrink-0 flex items-end justify-between pr-[7px] pb-[2px] border-r border-[#d4d4d4] text-[14.500px] leading-[21px] text-[#6f6f6f] whitespace-nowrap`}>
            <div>{h.map((l) => <div key={l}>{l}</div>)}</div>
            <FilterCaret />
          </div>
        ))}
        <div className="w-[87px] shrink-0 flex items-end pb-[2px] overflow-hidden italic text-[14.5px] leading-[21px] text-[#6f6f6f] whitespace-nowrap">
          <span className="-ml-[8px]">Добавить новый столбец</span>
        </div>
      </div>
      {all.map((r, ri) => (
        <div key={ri} className={`h-[25px] flex shrink-0 ${ri === 0 ? "border-b border-[#777]" : "border-b border-[#d6d6d6]"} box-border bg-white`}>
          <div className={`w-[53px] shrink-0 flex items-center justify-center text-[15px] ${ri === 0 ? "bg-[#c6c6c6] font-bold text-[#2f7133]" : "bg-[#e6e6e6] text-[#6b6b6b]"}`}>{ri < 6 ? ri + 1 : ""}</div>
          <div className={`w-[58px] shrink-0 border-r ${ri === 0 ? "bg-[#c6c6c6] border-2 border-[#3a7a3a]" : "border-[#d6d6d6]"}`} />
          {r.map((c, i) => (
            <div key={i} className={`${COLS[i]} shrink-0 overflow-hidden whitespace-nowrap flex items-center pt-[1px] ${RIGHT.includes(i) ? "justify-end" : ""} ${PAD[i]} ${i === 12 ? "" : "border-r border-[#d6d6d6]"} text-[15.700px] text-[#222]`}>{c}</div>
          ))}
        </div>
      ))}
    </div>
  );
}

const Tri = ({ d }: { d: string }) => (
  <svg width="8" height="10" viewBox="0 0 8 10"><path d={d} fill="#666" /></svg>
);

function Main() {
  return (
    <div className="flex-1 min-h-0 flex bg-white pt-[3px]">
      <div className="w-[31px] bg-[#e6e6e6] shrink-0 flex flex-col items-center pt-[314px]">
        <span className="[writing-mode:vertical-rl] rotate-180 text-[16.500px] leading-[18px] text-[#3a7d3a] font-semibold whitespace-nowrap">ЛИСТ РЕСУРСОВ</span>
      </div>
      <div className="w-[1791px] shrink-0 flex flex-col min-h-0">
        <Table />
        <div className="h-[22px] shrink-0 flex items-stretch bg-[#f1f1f1] py-[1px] pl-px pr-[2px] border-t border-[#dcdcdc]">
          <div className="w-[20px] bg-white border border-[#c0c0c0] flex items-center justify-center"><Tri d="M8 0v10L0 5z" /></div>
          <div className="w-[1520px] bg-white border border-[#b0b0b0]" />
          <div className="flex-1" />
          <div className="w-[19px] bg-white border border-[#c0c0c0] flex items-center justify-center"><Tri d="M0 0v10l8-5z" /></div>
        </div>
      </div>
      <div className="w-[20px] shrink-0 flex flex-col bg-[#f1f1f1]">
        <div className="h-[20px] bg-white border border-[#c0c0c0] flex items-center justify-center"><svg width="10" height="6" viewBox="0 0 10 6"><path d="M0 6h10L5 0z" fill="#666" /></svg></div>
        <div className="h-[672px] bg-white border border-[#b0b0b0]" />
        <div className="flex-1" />
        <div className="h-[19px] mb-[22px] bg-white border border-[#c0c0c0] flex items-center justify-center"><svg width="10" height="6" viewBox="0 0 10 6"><path d="M0 0h10L5 6z" fill="#666" /></svg></div>
      </div>
    </div>
  );
}

function Status() {
  const G = "#7d7d7d";
  return (
    <div className="h-[28px] shrink-0 bg-[#f1f1f1] border-t border-[#c8c8c8] border-b-2 border-b-[#8c8c8c] flex items-stretch text-[12.3px] text-[#555] whitespace-nowrap">
      <span className="self-center pl-[8px] w-[85px]">Готово</span>
      <span className="self-center"><Pin s={15} c="#777" /></span>
      <span className="self-center ml-[4px] text-[#444]">Новые задачи : Планирование вручную</span>
      <div className="ml-auto flex items-center pr-[8px]">
        <svg className="mr-[27px]" width="14" height="13" viewBox="0 0 14 13" fill="#fff" stroke={G}><rect x=".5" y=".5" width="13" height="12" /><path d="M2 3h4M4 6h5M6 9h6" /></svg>
        <svg className="mr-[27px]" width="14" height="13" viewBox="0 0 14 13" fill="#fff" stroke={G}><rect x=".5" y=".5" width="13" height="12" /><rect x="0" y="0" width="14" height="3" fill={G} /><path d="M4 3v10M7 3v10M10 3v10M0 6.500h14M0 9.500h14" /></svg>
        <svg className="mr-[14px]" width="14" height="13" viewBox="0 0 14 13" fill="#fff" stroke={G}><rect x=".5" y=".5" width="13" height="12" /><rect x="0" y="0" width="7" height="6" fill={G} /><rect x="7" y="6" width="7" height="7" fill={G} /></svg>
        <div className="w-[41px] h-full bg-[#c6c6c6] flex items-center justify-center">
          <svg width="14" height="13" viewBox="0 0 14 13" fill="none" stroke={G}><rect x=".5" y=".5" width="13" height="12" /><path d="M4.500 0v13M9 0v13M0 4.500h14M0 8.500h14" /></svg>
        </div>
        <svg className="ml-[13px] mr-[20px]" width="14" height="13" viewBox="0 0 14 13" fill="#fff" stroke={G}><path d="M3.500.5h10v12h-10zM1 3h5M1 9h5" /></svg>
        <span className="w-[9px] h-[2px] bg-[#a8a8a8] mr-[4px]" />
        <div className="w-[125px] h-px bg-[#b5b5b5] relative mr-[4px]"><span className="absolute left-[62px] -top-[3px] w-px h-[7px] bg-[#b0b0b0]" /></div>
        <svg width="11" height="11" viewBox="0 0 11 11" stroke="#a8a8a8" strokeWidth="2"><path d="M0 5.500h11M5.500 0v11" /></svg>
      </div>
    </div>
  );
}

function Row({ children, h = "h-[39px]", run, active }: { children: React.ReactNode; h?: string; run?: boolean; active?: boolean }) {
  return (
    <div className={`${h} w-full relative flex items-center justify-center shrink-0`}>
      {active && <span className="absolute left-[25px] right-0 top-[3px] bottom-[2px] bg-[#4f1f07]" />}
      {run && <span className="absolute right-0 top-[5px] bottom-[5px] w-[3px] bg-[#b89782]" />}
      <span className="relative flex">{children}</span>
    </div>
  );
}

function Taskbar() {
  return (
    <div className="w-[78px] h-[1080px] bg-[#1d0f08] flex flex-col items-center text-[#eee] shrink-0">
      <Row h="h-[38px]">
        <svg width="20" height="20" viewBox="0 0 20 20" fill="#fff"><path d="M0 3l9-1.300v8H0zM10 1.500L20 0v9.700H10zM0 10.700h9v8L0 17.400zM10 10.700h10V20l-10-1.500z" /></svg>
      </Row>
      <Row h="h-[38px]">
        <svg width="20" height="20" viewBox="0 0 20 20" fill="none" stroke="#fff" strokeWidth="1.200"><circle cx="12" cy="8" r="7" /><path d="M7 13l-7 7" /></svg>
      </Row>
      <Row h="h-[41px]">
        <svg width="20" height="19" viewBox="0 0 20 19" fill="none" stroke="#fff" strokeWidth="1.200"><path d="M0 1h14M0 18h14" /><rect x="1" y="4" width="12" height="11" /><path d="M18.500 1v3M18.500 7v3" strokeWidth="2" /><path d="M18.500 13v5" /></svg>
      </Row>
      <Row run>
        <svg width="20" height="20" viewBox="0 0 20 20"><circle cx="10" cy="10" r="9.500" fill="#e33b2e" /><path d="M10 10L1.500 14.500A9.500 9.500 0 0 0 10 19.500z" fill="#2f9e44" /><path d="M10 10l8.500-4A9.500 9.500 0 0 1 10 19.500z" fill="#fbc02d" /><circle cx="10" cy="10" r="4.500" fill="#fff" /><circle cx="10" cy="10" r="3.400" fill="#4285f4" /></svg>
      </Row>
      <Row run>
        <svg width="20" height="18" viewBox="0 0 20 18"><path d="M0 0h8l2 3h10v15H0z" fill="#f6c84a" /><rect y="5" width="20" height="2" fill="#fde58b" /><path d="M5 18v-7h10v7h-3v-4H8v4z" fill="#3e8ed0" /></svg>
      </Row>
      <Row run>
        <svg width="20" height="20" viewBox="0 0 20 20"><rect x="10" y="2" width="10" height="16" fill="#f2f2f2" /><path d="M12 6h6M12 9h6M12 12h6M12 15h6" stroke="#2b579a" /><path d="M0 2l12-2v20L0 18z" fill="#2b579a" /><text x="1.500" y="14" fontSize="10" fontWeight="700" fill="#fff" fontFamily="Liberation Sans">W</text></svg>
      </Row>
      <Row run>
        <svg width="20" height="20" viewBox="0 0 20 20"><circle cx="10" cy="10" r="10" fill="#5865f2" /><path d="M5 6.500c3-1.300 7-1.300 10 0 1 2 1.500 4.500 1.300 6.500-1 .8-2 1.200-3 1.400l-.8-1.300h-5l-.8 1.300c-1-.2-2-.6-3-1.400-.2-2 .3-4.500 1.300-6.500z" fill="#fff" /><circle cx="7.800" cy="10.300" r="1.300" fill="#5865f2" /><circle cx="12.200" cy="10.300" r="1.300" fill="#5865f2" /></svg>
      </Row>
      <Row run active>
        <svg width="20" height="20" viewBox="0 0 20 20"><rect x="9" y="2" width="11" height="16" fill="#d8e8d4" /><path d="M11 6h3l1 2h3M11 11h3l1 2h3" stroke="#2e6b2e" strokeWidth="1.500" fill="none" /><path d="M0 2l12-2v20L0 18z" fill="#2e7d32" /><text x="2.500" y="14" fontSize="11" fontWeight="700" fill="#fff" fontFamily="Liberation Sans">P</text></svg>
      </Row>
      <Row run>
        <svg width="20" height="20" viewBox="0 0 20 20"><circle cx="10" cy="10" r="10" fill="#2ca5e0" /><path d="M3.500 10l12-5-2 11-4-3-2 2-.5-3.500z" fill="#fff" /></svg>
      </Row>
      <div className="mt-auto w-full flex flex-col items-center">
        <Row h="h-[30px]">
          <svg className="mr-[36px]" width="10" height="17" viewBox="0 0 10 17" fill="none" stroke="#fff"><path d="M9 1L1 8.500 9 16" /></svg>
        </Row>
        <Row h="h-[30px]">
          <span className="flex items-center gap-[11px]">
            <svg width="16" height="15" viewBox="0 0 16 15" fill="none" stroke="#ddd"><path d="M1 14C1 6 7 1 15 1M5 14c0-5 4-9 10-9M9 14c0-3 2-5 6-5" /><circle cx="13" cy="13" r="1.500" fill="#fff" stroke="none" /></svg>
            <svg width="20" height="12" viewBox="0 0 20 12" fill="none" stroke="#fff"><rect x="4.500" y="1.500" width="14" height="9" /><rect x="6" y="3" width="11" height="6" fill="#fff" stroke="none" /><path d="M2 0v5" strokeWidth="2" /></svg>
          </span>
        </Row>
        <div className="h-[38px] w-full bg-[#3a2c23] flex items-center justify-center">
          <svg width="20" height="21" viewBox="0 0 20 21" fill="none" stroke="#eee"><path d="M12 1l3 1-7 16-3-1zM15 6c3 1 5 3 2 5M5 13c-5 2-4 7 0 7" /></svg>
        </div>
        <div className="h-[42px] flex items-center text-[14px]">РУС</div>
        <div className="h-[72px] pt-[6px] flex flex-col items-center text-[14px] leading-[22px] whitespace-nowrap">
          <span>14:46</span>
          <span>26.11.2021</span>
        </div>
        <div className="h-[44px] flex items-center">
          <svg width="20" height="20" viewBox="0 0 20 20" fill="none" stroke="#fff"><path d="M.5.500h19v14h-3l-2 4-3-4H.5z" /></svg>
        </div>
        <div className="h-[14px] w-full flex items-end pb-[5px]"><span className="w-full h-px bg-[#5a4a40]" /></div>
      </div>
    </div>
  );
}

export default function App() {
  return (
    <div className="relative w-[1920px] h-[1080px] overflow-hidden flex bg-white font-['Open_Sans','Noto_Sans',sans-serif]">
      <div className="w-[1842px] h-[1080px] flex flex-col shrink-0">
        <TitleBar />
        <Ribbon />
        <Timeline />
        <Main />
        <Status />
      </div>
      <Taskbar />
      <InkLayer />
    </div>
  );
}
